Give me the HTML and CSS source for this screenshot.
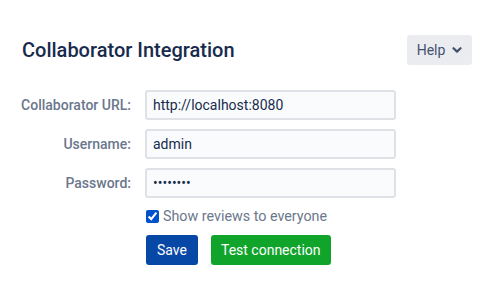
FILE: index.html
```html
<!DOCTYPE html>
<html lang="en">
<head>
    <meta charset="UTF-8">
    <meta name="viewport" content="width=device-width, initial-scale=1.0">
    <title>Collaborator Integration</title>
    <link rel="stylesheet" href="styles.css">
</head>
<body>

    <div class="page">
        <header class="page-header">
            <h1>Collaborator Integration</h1>
            <button class="btn-help" type="button">Help
                <svg width="10" height="8" viewBox="0 0 10 8"><path d="M1.5 2.2 L5 5.6 L8.5 2.2" fill="none" stroke="#42526e" stroke-width="2.2" stroke-linecap="round" stroke-linejoin="round"/></svg>
            </button>
        </header>

        <!-- Formulaire de connexion -->
        <form class="settings-form">
            <label for="url">Collaborator URL:</label>
            <input type="text" id="url" value="http://localhost:8080">

            <label for="username">Username:</label>
            <input type="text" id="username" value="admin">

            <label for="password">Password:</label>
            <input type="password" id="password" value="password">

            <div class="check-row">
                <input type="checkbox" id="showReviews" checked>
                <label for="showReviews">Show reviews to everyone</label>
            </div>

            <div class="buttons">
                <button class="btn btn-save" type="button">Save</button>
                <button class="btn btn-test" type="button">Test connection</button>
            </div>
        </form>
    </div>

</body>
</html>
```

FILE: styles.css
```css
body {
    margin: 0;
    font-family: Roboto, "Noto Sans", sans-serif;
    font-size: 14px;
    color: #172b4d;
    background: #fff;
}

.page {
    padding: 35px 28px 0 20px;
}

.page-header {
    display: flex;
    justify-content: space-between;
    align-items: center;
}

.page-header h1 {
    margin: 0 0 0 2px;
    font-size: 20px;
    font-weight: 500;
    color: #172b4d;
}

.btn-help {
    display: flex;
    align-items: center;
    justify-content: center;
    gap: 7px;
    height: 30px;
    width: 65px;
    padding: 0;
    border: none;
    border-radius: 3px;
    background-color: #ebecf0;
    color: #42526e;
    font-family: inherit;
    font-size: 14px;
}

.settings-form {
    display: grid;
    grid-template-columns: 111px 251px;
    column-gap: 14px;
    row-gap: 9px;
    align-items: center;
    margin-top: 25px;
}

.settings-form > label {
    text-align: right;
    white-space: nowrap;
    font-weight: 500;
    color: #6b778c;
}

.settings-form input[type="text"],
.settings-form input[type="password"] {
    box-sizing: border-box;
    height: 30px;
    padding: 0 6px;
    border: 2px solid #dfe1e6;
    border-radius: 3px;
    background-color: #fafbfc;
    color: #172b4d;
    font-family: inherit;
    font-size: 14px;
    outline: none;
}

.check-row {
    grid-column: 2;
    display: flex;
    align-items: center;
    gap: 4px;
    margin-top: 1px;
    color: #6b778c;
    font-size: 14.3px;
}

.check-row input {
    margin: 0 0 0 1px;
    width: 13px;
    height: 13px;
    accent-color: #0052cc;
}

.buttons {
    grid-column: 2;
    display: flex;
    gap: 13px;
    margin-top: 2px;
}

.btn {
    height: 30px;
    padding: 0 11px;
    border: none;
    border-radius: 3px;
    color: #fff;
    font-family: inherit;
    font-size: 14px;
}

.btn-save {
    margin-left: 1px;
    background-color: #0747a6;
}

.btn-test {
    padding: 0 10px;
    background-color: #10a52a;
}
```
